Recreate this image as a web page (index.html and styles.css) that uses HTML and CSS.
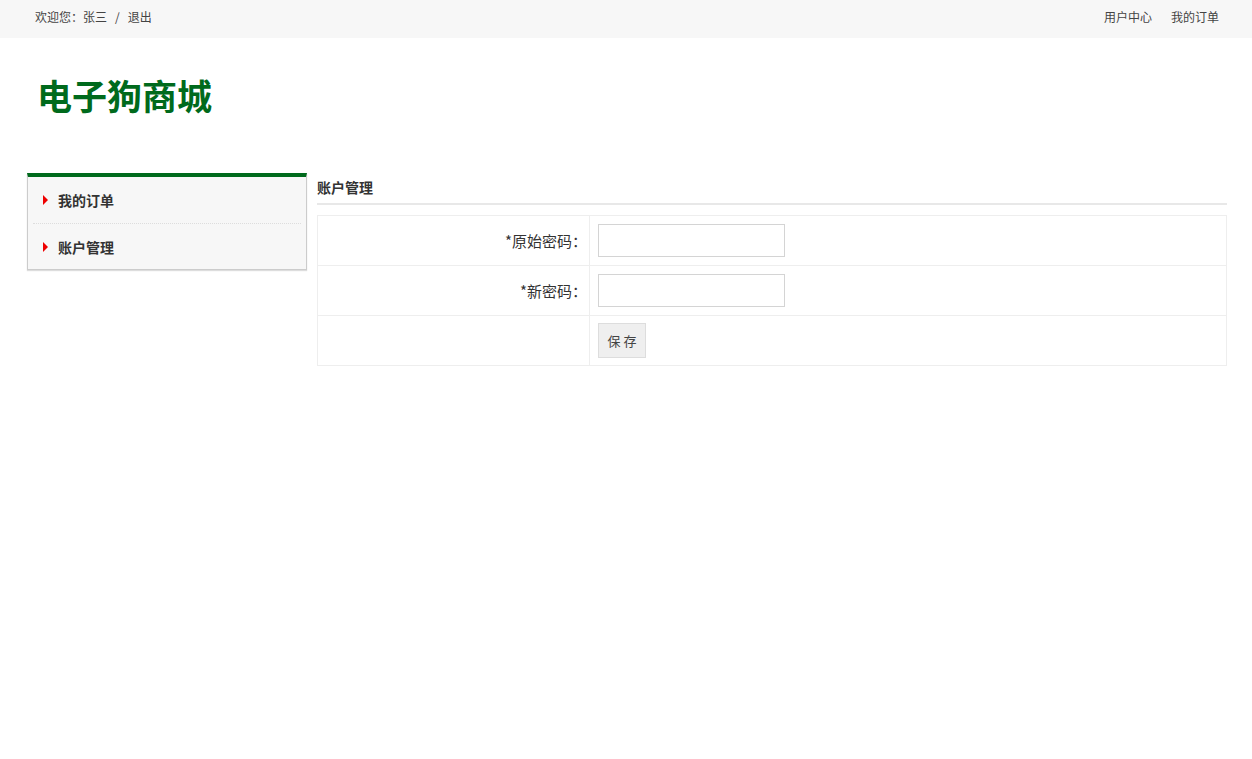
FILE: index.html
```html
<!DOCTYPE html>
<html lang="zh">
<head>
<meta charset="utf-8">
<title>电子狗商城</title>
<link rel="stylesheet" href="styles.css">
</head>
<body>
<div class="topbar">
  <div class="topbar-left">欢迎您：张三<span class="sep">/</span>退出</div>
  <div class="topbar-right"><a>用户中心</a><a>我的订单</a></div>
</div>
<div class="header">
  <h1 class="logo">电子狗商城</h1>
</div>
<div class="main">
  <div class="sidebar">
    <div class="side-item"><span class="tri"></span>我的订单</div>
    <div class="side-item"><span class="tri"></span>账户管理</div>
  </div>
  <div class="content">
    <div class="content-title">账户管理</div>
    <table class="form-table">
      <tr>
        <td class="label">*原始密码：</td>
        <td class="field"><input class="inp" type="password"></td>
      </tr>
      <tr>
        <td class="label">*新密码：</td>
        <td class="field"><input class="inp" type="password"></td>
      </tr>
      <tr>
        <td class="label"></td>
        <td class="field"><button class="btn">保 存</button></td>
      </tr>
    </table>
  </div>
</div>
</body>
</html>
```
FILE: styles.css
```css
* { box-sizing: border-box; }
body {
  margin: 0;
  font-family: "Noto Sans CJK SC", "Liberation Sans", sans-serif;
  color: #333;
  background: #fff;
}
.topbar {
  height: 38px;
  background: #f7f7f7;
  display: flex;
  justify-content: space-between;
  align-items: center;
  padding: 0 33px 5px 35px;
  font-size: 12px;
  color: #444;
}
.sep { margin: 0 8px; }
.topbar-right a { margin-left: 19px; }
.header { height: 135px; padding: 32px 0 0 37px; }
.logo {
  margin: 0;
  font-size: 35px;
  line-height: 50px;
  font-weight: bold;
  color: #006a1c;
  letter-spacing: 0;
}
.main {
  display: flex;
  padding: 0 25px 0 27px;
  gap: 10px;
  align-items: flex-start;
}
.sidebar {
  width: 280px;
  flex: none;
  border-top: 4px solid #006a1c;
  border-left: 1px solid #ccc;
  border-right: 1px solid #ccc;
  border-bottom: 1px solid #ccc;
  box-shadow: 0 1px 1px #ddd;
  background: #f7f7f7;
  padding: 0 5px;
}
.side-item {
  height: 46px;
  display: flex;
  align-items: center;
  padding-left: 10px;
  font-size: 14px;
  font-weight: bold;
  color: #333;
}
.side-item + .side-item { border-top: 1px dotted #ddd; }
.tri {
  width: 0; height: 0;
  border-top: 5px solid transparent;
  border-bottom: 5px solid transparent;
  border-left: 5px solid #e00;
  margin-right: 10px;
}
.content { flex: 1; }
.content-title {
  font-size: 14px;
  font-weight: bold;
  height: 32px;
  line-height: 28px;
  border-bottom: 2px solid #e8e8e8;
  margin-bottom: 10px;
}
.form-table {
  width: 100%;
  border-collapse: collapse;
}
.form-table td {
  border: 1px solid #eee;
  height: 50px;
  padding: 0 8px;
}
.label {
  width: 272px;
  text-align: right;
  font-size: 15px;
  color: #333;
  padding-right: 2px !important;
}
.inp {
  width: 187px;
  height: 33px;
  border: 1px solid #d4d4d4;
  display: block;
  outline: none;
}
.btn {
  width: 48px;
  height: 35px;
  background: #efefef;
  border: 1px solid #ddd;
  font-family: inherit;
  font-size: 13px;
  color: #444;
  display: block;
  padding: 0;
}
```
